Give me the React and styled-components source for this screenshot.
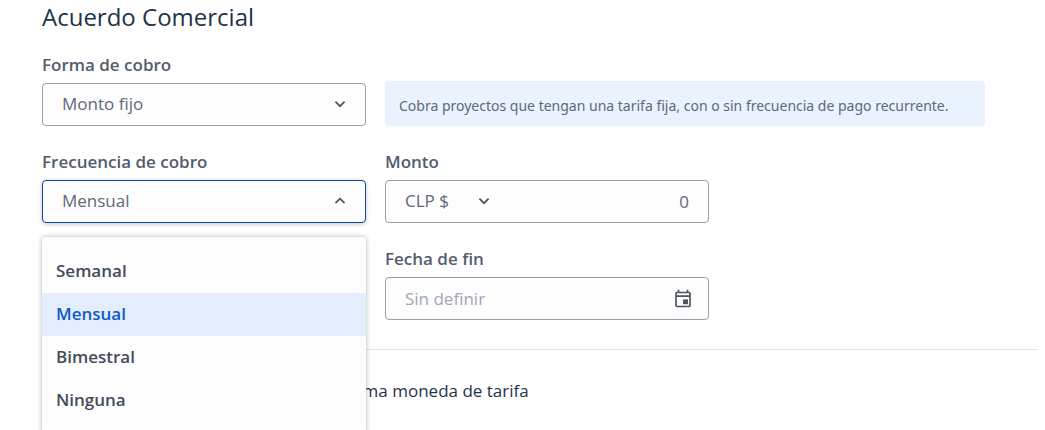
import React, { useState } from 'react';
import styled, { createGlobalStyle } from 'styled-components';

const GlobalStyle = createGlobalStyle`
    *, *::before, *::after {
        box-sizing: border-box;
    }

    body {
        margin: 0;
        background-color: #fff;
        color: #1f334a;
        font-family: 'Open Sans', 'Noto Sans', sans-serif;
        font-size: 17px;
        line-height: 24px;
    }
`;

const Page = styled.main`
    padding: 0 7px 40px 42px;
`;

const Title = styled.h2`
    margin: 0;
    padding-top: 1px;
    font-size: 24px;
    font-weight: 400;
    line-height: 32px;
`;

const Form = styled.div`
    display: grid;
    grid-template-columns: minmax(0, 324px) minmax(0, 324px) minmax(0, 1fr);
    column-gap: 19px;
    row-gap: 24px;
    padding-top: 20px;
`;

const Field = styled.div`
    position: relative;
    grid-column: ${props => props.$column};
`;

const Label = styled.label`
    display: block;
    margin-bottom: 6px;
    color: #525d6e;
    font-weight: 600;
`;

const Control = styled.div`
    display: flex;
    align-items: center;
    height: 43px;
    border: 1px solid ${props => props.$open ? '#0d4aa3' : '#9a9fb0'};
    border-radius: 4px;
    background-color: #fdfdfd;
    box-shadow: ${props => props.$open ? '0 1px 4px rgba(0, 0, 0, 0.25)' : 'none'};
`;

const Select = styled.select`
    appearance: none;
    width: ${props => props.$width || '100%'};
    height: 100%;
    padding: 0 40px 2px 19px;
    border: none;
    outline: none;
    background: transparent;
    color: #5f6979;
    font: inherit;
    cursor: pointer;
`;

const Arrow = styled.svg`
    flex: none;
    width: 12px;
    height: 8px;
    margin: 0 19px 1px -31px;
    pointer-events: none;
`;

const Input = styled.input`
    flex: 1;
    width: 100%;
    min-width: 0;
    height: 100%;
    padding: 0 19px;
    border: none;
    outline: none;
    background: transparent;
    color: #5f6979;
    font: inherit;
    text-align: ${props => props.$align || 'left'};

    &::placeholder {
        color: #a0a6b4;
        opacity: 1;
    }
`;

const IconButton = styled.button`
    display: flex;
    margin-right: 15px;
    padding: 0;
    border: none;
    background: none;
    color: #4b5563;
    cursor: pointer;
`;

const Hint = styled.p`
    grid-column: 2 / 4;
    align-self: end;
    max-width: 600px;
    margin: 0;
    padding: 15px 14px 10px;
    border-radius: 4px;
    background-color: #eaf2fe;
    color: #5f6979;
    font-family: 'Noto Sans', 'Open Sans', sans-serif;
    font-size: 14px;
    line-height: 20px;
`;

const Menu = styled.ul`
    position: absolute;
    z-index: 10;
    top: 100%;
    left: 0;
    right: 0;
    margin: 14px 0 0;
    padding: 13px 0;
    border-radius: 4px;
    background-color: #fdfdfd;
    box-shadow: 0 0 5px rgba(0, 0, 0, 0.3);
    list-style: none;
`;

const Option = styled.button`
    display: block;
    width: 100%;
    height: 43px;
    padding: 0 14px 1px;
    border: none;
    background-color: ${props => props.$selected ? '#e4edfc' : 'transparent'};
    color: ${props => props.$selected ? '#1059c9' : '#434c5c'};
    font: inherit;
    font-weight: 600;
    text-align: left;
    cursor: pointer;
`;

const Divider = styled.hr`
    height: 1px;
    margin: 29px 0;
    border: none;
    background-color: #e4e4e4;
`;

const CheckRow = styled.label`
    display: flex;
    align-items: center;
    gap: 12px;
    padding-left: 152px;
`;

const Checkbox = styled.input`
    width: 18px;
    height: 18px;
    margin: 0;
`;

const Chevron = ({up}) => (
    <Arrow viewBox="0 0 12 8" fill="none" stroke="#4b5563" strokeWidth="1.8" aria-hidden="true">
        <path d={up ? 'M1.4 6.2 6 1.7l4.6 4.5' : 'M1.4 1.7 6 6.2l4.6-4.5'}/>
    </Arrow>
);

const CalendarIcon = () => (
    <svg width="20" height="20" viewBox="0 0 20 20" fill="none" aria-hidden="true">
        <path d="M3.9 3.5h12.2c.5 0 .9.4.9.9v12.2c0 .5-.4.9-.9.9H3.9c-.5 0-.9-.4-.9-.9V4.4c0-.5.4-.9.9-.9Z" stroke="currentColor" strokeWidth="1.7"/>
        <path d="M3 7.2h14M5.5.8v3M14.5.8v3" stroke="currentColor" strokeWidth="1.7"/>
        <path d="M10 10.4h5v4.8h-5z" fill="currentColor"/>
    </svg>
);

const frequencies = ['Semanal', 'Mensual', 'Bimestral', 'Ninguna'];

const FrequencySelect = () => {
    const [open, setOpen] = useState(true);
    const [value, setValue] = useState('Mensual');

    const onToggle = (e) => {
        e.preventDefault();
        setOpen(!open);
    }

    const onPick = (name) => () => {
        setValue(name);
        setOpen(false);
    }

    return (
        <Field $column={1}>
            <Label htmlFor="frequency">Frecuencia de cobro</Label>
            <Control $open={open}>
                <Select id="frequency" value={value} onMouseDown={onToggle} onChange={e => setValue(e.target.value)}>
                    { frequencies.map(name => <option key={name}>{name}</option>) }
                </Select>
                <Chevron up={open}/>
            </Control>
            {
                open ? (
                    <Menu>
                        {
                            frequencies.map(name => (
                                <li key={name}>
                                    <Option type="button" $selected={name === value} onClick={onPick(name)}>{name}</Option>
                                </li>
                            ))
                        }
                    </Menu>
                ) : null
            }
        </Field>
    );
}

const App = () => {
    const [amount, setAmount] = useState('0');

    return (
        <Page>
            <GlobalStyle/>
            <Title>Acuerdo Comercial</Title>
            <Form>
                <Field $column={1}>
                    <Label htmlFor="method">Forma de cobro</Label>
                    <Control>
                        <Select id="method">
                            <option>Monto fijo</option>
                        </Select>
                        <Chevron/>
                    </Control>
                </Field>
                <Hint>Cobra proyectos que tengan una tarifa fija, con o sin frecuencia de pago recurrente.</Hint>
                <FrequencySelect/>
                <Field $column={2}>
                    <Label htmlFor="amount">Monto</Label>
                    <Control>
                        <Select $width="123px" aria-label="Moneda">
                            <option>CLP $</option>
                        </Select>
                        <Chevron/>
                        <Input id="amount" $align="right" value={amount} onChange={e => setAmount(e.target.value)}/>
                    </Control>
                </Field>
                <Field $column={2}>
                    <Label htmlFor="end">Fecha de fin</Label>
                    <Control>
                        <Input id="end" placeholder="Sin definir"/>
                        <IconButton type="button" aria-label="Calendario"><CalendarIcon/></IconButton>
                    </Control>
                </Field>
            </Form>
            <Divider/>
            <CheckRow>
                <Checkbox type="checkbox"/>
                <span>Cobrar con la misma moneda de tarifa</span>
            </CheckRow>
        </Page>
    );
}

export default App;
